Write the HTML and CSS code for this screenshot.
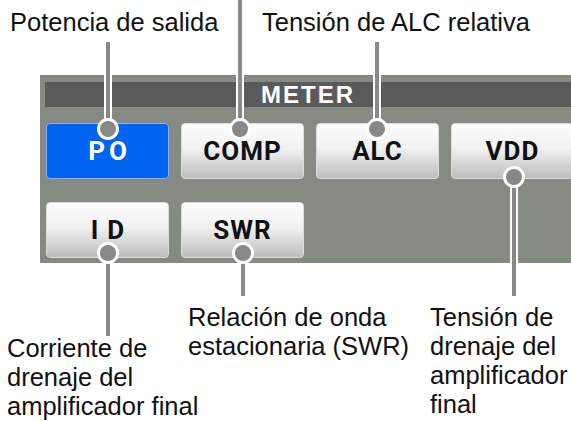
FILE: index.html
```html
<!DOCTYPE html>
<html lang="es">
<head>
    <meta charset="UTF-8">
    <meta name="viewport" content="width=device-width, initial-scale=1.0">
    <title>METER</title>
    <link rel="stylesheet" href="styles.css">
</head>
<body>
    <div class="figure">
        <div class="panel">
            <div class="panel-title">METER</div>
            <div class="keys">
                <div class="key key-on key-po">PO</div>
                <div class="key">COMP</div>
                <div class="key">ALC</div>
                <div class="key">VDD</div>
                <div class="key key-id">ID</div>
                <div class="key">SWR</div>
            </div>
        </div>

        <!-- leader lines from the labels to the keys -->
        <svg class="leaders" width="571" height="421" viewBox="0 0 571 421">
            <g class="halo">
                <line x1="108" y1="42" x2="108" y2="129"/>
                <line x1="240" y1="0" x2="240" y2="129"/>
                <line x1="377" y1="42" x2="377" y2="129"/>
                <line x1="514" y1="177" x2="514" y2="296"/>
                <line x1="108" y1="253" x2="108" y2="336"/>
                <line x1="243" y1="253" x2="243" y2="296"/>
            </g>
            <g class="stem">
                <line x1="108" y1="42" x2="108" y2="129"/>
                <line x1="240" y1="0" x2="240" y2="129"/>
                <line x1="377" y1="42" x2="377" y2="129"/>
                <line x1="514" y1="177" x2="514" y2="296"/>
                <line x1="108" y1="253" x2="108" y2="336"/>
                <line x1="243" y1="253" x2="243" y2="296"/>
            </g>
            <g class="dot">
                <circle cx="108" cy="129" r="9.5"/>
                <circle cx="240" cy="129" r="9.5"/>
                <circle cx="377" cy="129" r="9.5"/>
                <circle cx="514" cy="177" r="9.5"/>
                <circle cx="108" cy="253" r="9.5"/>
                <circle cx="243" cy="253" r="9.5"/>
            </g>
        </svg>

        <p class="note note-po">Potencia de salida</p>
        <p class="note note-alc">Tensión de ALC relativa</p>
        <p class="note note-swr">Relación de onda<br>estacionaria (SWR)</p>
        <p class="note note-id">Corriente de<br>drenaje del<br>amplificador final</p>
        <p class="note note-vdd">Tensión de<br>drenaje del<br>amplificador<br>final</p>
    </div>
</body>
</html>
```

FILE: styles.css
```css
body {
    margin: 0;
    background: #fff;
    font-family: "Liberation Sans", Arial, sans-serif;
}
.figure {
    position: relative;
    width: 571px;
    height: 421px;
    overflow: hidden;
    padding-top: 75px;
    box-sizing: border-box;
}
.panel {
    margin-left: 40px;
    padding: 7px 0 5px 5px;
    background: #858a82;
}
.panel-title {
    height: 25px;
    line-height: 26px;
    background: #5a5a5a;
    color: #fff;
    text-align: center;
    font-weight: 700;
    font-size: 24px;
    letter-spacing: 2px;
}
.keys {
    display: grid;
    grid-template-columns: repeat(4, 123px);
    grid-auto-rows: 56px;
    column-gap: 12px;
    row-gap: 23px;
    margin-top: 16px;
    padding-left: 1px;
}
.key {
    display: flex;
    align-items: center;
    justify-content: center;
    box-sizing: border-box;
    border: 1px solid #dcdcdc;
    border-radius: 4px;
    background: linear-gradient(#fdfdfd 0%, #f1f1f1 45%, #bdbdbd 100%);
    color: #111;
    font-family: Roboto, "Liberation Sans", sans-serif;
    font-weight: 700;
    font-size: 26px;
    letter-spacing: 1px;
}
.key-on {
    background: #0064f0;
    border-color: #8ab2f6;
    color: #fff;
}
.key-po {
    letter-spacing: 4px;
    text-indent: 4px;
}
.key-id {
    letter-spacing: 9px;
    text-indent: 9px;
}
.leaders {
    position: absolute;
    top: 0;
    left: 0;
}
.halo line {
    stroke: #fff;
    stroke-width: 8;
}
.stem line {
    stroke: #888;
    stroke-width: 4;
}
.dot circle {
    fill: #888;
    stroke: #fff;
    stroke-width: 3;
}
.note {
    position: absolute;
    margin: 0;
    font-size: 25.5px;
    line-height: 29px;
    color: #111;
    white-space: nowrap;
}
.note-po {
    left: 10px;
    top: 8px;
}
.note-alc {
    left: 262px;
    top: 8px;
}
.note-swr {
    left: 188px;
    top: 303px;
}
.note-id {
    left: 7px;
    top: 334px;
}
.note-vdd {
    left: 430px;
    top: 303px;
}
```
